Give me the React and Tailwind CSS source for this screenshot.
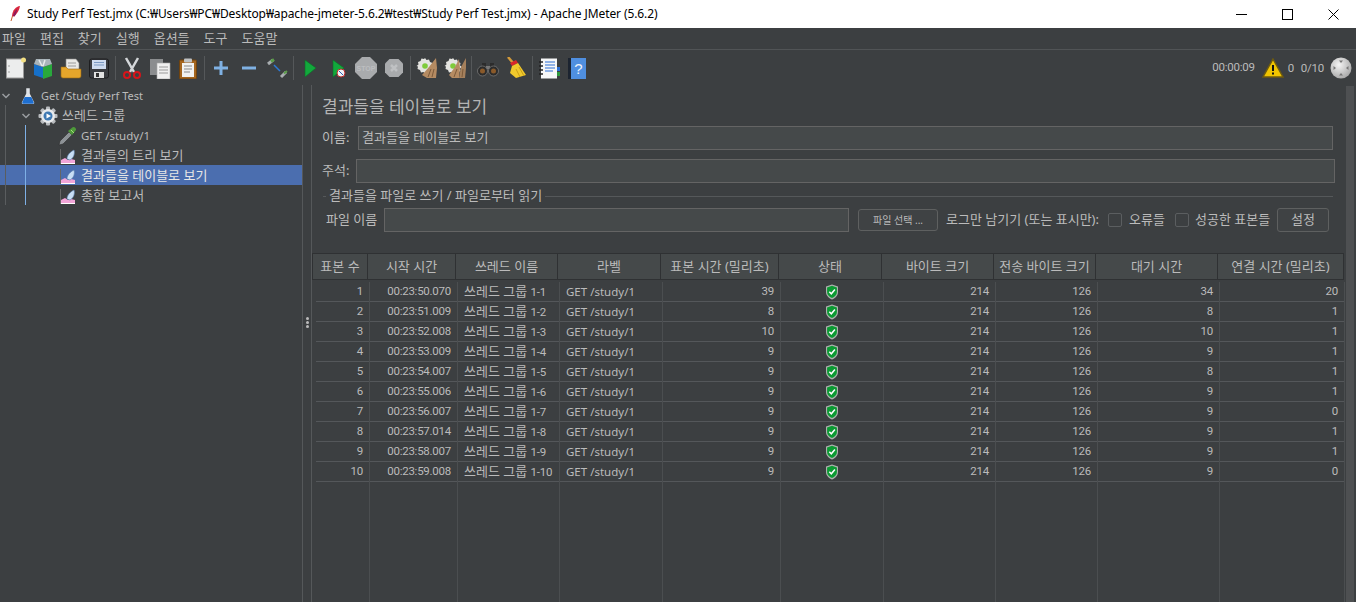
const FONT = 'font-["Noto_Sans","Noto_Sans_CJK_KR",sans-serif]';

const MENUS = ['파일', '편집', '찾기', '실행', '옵션들', '도구', '도움말'];

const HEADERS = [
  ['표본 수', 55],
  ['시작 시간', 88],
  ['쓰레드 이름', 102],
  ['라벨', 103],
  ['표본 시간 (밀리초)', 118],
  ['상태', 103],
  ['바이트 크기', 112],
  ['전송 바이트 크기', 102],
  ['대기 시간', 122],
  ['연결 시간 (밀리초)', 125],
];

const TIMES = ['50.070', '51.009', '52.008', '53.009', '54.007', '55.006', '56.007', '57.014', '58.007', '59.008'];
const ELAPSED = [39, 8, 10, 9, 9, 9, 9, 9, 9, 9];
const LATENCY = [34, 8, 10, 9, 8, 9, 9, 9, 9, 9];
const CONNECT = [20, 1, 1, 1, 1, 1, 0, 1, 1, 0];

const rowIds = TIMES.map((_, i) => i);

function Num({ children }) {
  return <span className='font-["Roboto",sans-serif] text-[11.5px] tracking-[-0.25px]'>{children}</span>;
}

const COLUMNS = [
  { width: 54, align: 'r', cells: rowIds.map((i) => <Num>{i + 1}</Num>) },
  { width: 88, align: 'r', cells: TIMES.map((t) => <Num>{`00:23:${t}`}</Num>) },
  {
    width: 102,
    align: 'l',
    cells: rowIds.map((i) => (
      <span>쓰레드 그룹 <Num>{`1-${i + 1}`}</Num></span>
    )),
  },
  { width: 103, align: 'l', cells: rowIds.map(() => <span className="text-[11.500px]">GET /study/1</span>) },
  { width: 118, align: 'r', cells: ELAPSED.map((v) => <Num>{v}</Num>) },
  { width: 103, align: 'c', cells: rowIds.map(() => <Shield />) },
  { width: 112, align: 'r', cells: rowIds.map(() => <Num>214</Num>) },
  { width: 102, align: 'r', cells: rowIds.map(() => <Num>126</Num>) },
  { width: 122, align: 'r', cells: LATENCY.map((v) => <Num>{v}</Num>) },
  { width: 125, align: 'r', cells: CONNECT.map((v) => <Num>{v}</Num>) },
];

function Shield() {
  return (
    <svg width="14" height="16" viewBox="0 0 14 16">
      <path d="M7 .5 13 2.500V8c0 3.600-2.600 6-6 7.500C3.600 14 1 11.600 1 8V2.500Z" fill="#aeb2ae" />
      <path d="M7 1.800 11.900 3.400V8c0 2.800-2 4.700-4.900 6.100C4.100 12.700 2.100 10.800 2.100 8V3.400Z" fill="#0c9a33" />
      <path d="M4.300 7.800 6.300 9.800 9.900 5.600" fill="none" stroke="#fff" strokeWidth="1.500" />
    </svg>
  );
}

function Feather() {
  return (
    <svg width="14" height="18" viewBox="0 0 14 18">
      <path d="M12 1C8 1.500 4.500 5 4 11l2 .5C9 9 11.500 5 12 1Z" fill="#d8273f" />
      <path d="M9 4C7 6 5.500 8 5 11l1.500.500C8 9 9 6.500 9 4Z" fill="#8d1b5e" />
      <path d="M4.500 11 3 16" stroke="#c45a2a" strokeWidth="1" />
    </svg>
  );
}

function Flask() {
  return (
    <svg width="14" height="20" viewBox="0 0 16 20">
      <path d="M6 1h4v6l5 10c.4 1-.2 2-1.200 2H2.200C1.200 19 .6 18 1 17L6 7Z" fill="#dfe3e8" />
      <path d="M4.200 11h7.600l2.700 6c.3 1-.2 1.800-1 1.800H2.500c-.8 0-1.300-.8-1-1.800Z" fill="#1f6fd0" />
    </svg>
  );
}

function Gear() {
  const teeth = [0, 45, 90, 135];
  return (
    <svg width="20" height="20" viewBox="0 0 20 20">
      {teeth.map((a) => (
        <rect key={a} x="8" y="0.500" width="4" height="19" rx="1" fill="#b9bcbf" transform={`rotate(${a} 10 10)`} />
      ))}
      <circle cx="10" cy="10" r="7" fill="#e8eaec" />
      <circle cx="10" cy="10" r="4.500" fill="#3e79b3" />
      <path d="M8.500 7.500 13 10l-4.500 2.500Z" fill="#fff" />
    </svg>
  );
}

function Pipette() {
  return (
    <svg width="20" height="20" viewBox="0 0 20 20">
      <path d="M1 19 2 15 11 6l3 3-9 9Z" fill="#8d9296" stroke="#2b2b2b" strokeWidth=".6" />
      <path d="M10 5 15 1c1.500-.5 3.500 1.500 3 3l-4 5Z" fill="#4e9a3a" />
      <path d="M13 4l3 3" stroke="#a5dc7c" strokeWidth="1" />
    </svg>
  );
}

function Listener() {
  return (
    <svg width="16" height="16" viewBox="0 0 16 16">
      <path d="M.5 1v15" stroke="#666" strokeWidth="1" />
      <path d="M1 15v-3l4-2 3 2 3-1 4 1v3Z" fill="#f2a5d8" />
      <path d="M7 11C7 7 10 4 14 2c1 3 0 8-4 10Z" fill="#c8def5" stroke="#5b7fae" strokeWidth=".6" />
      <path d="M1 15.500h14" stroke="#fff" strokeWidth="1" />
    </svg>
  );
}

function Chevron() {
  return (
    <svg width="10" height="10" viewBox="0 0 10 10" className="shrink-0">
      <path d="M1.500 3 5 6.500 8.500 3" fill="none" stroke="#9a9da0" strokeWidth="1.500" />
    </svg>
  );
}

function BroomGear() {
  return (
    <>
      <path d="M9 1l1.500 2 2.500-.5 1 2.500 2.500 1-.5 2.500 2 1.500-2 1.500.5 2.500-2.500 1-1 2.500-2.500-.5L9 17l-1.500-2-2.500.5-1-2.500-2.500-1 .5-2.500L.500 9l2-1.500L2 5l2.500-1 1-2.500L8 2Z" fill="#e4e4e0" />
      <circle cx="9" cy="9" r="2.800" fill="#7fcb3a" />
    </>
  );
}

function ToolIcon({ name }) {
  const icons = {
    newFile: (
      <>
        <rect x="2.500" y="2" width="17" height="19" fill="#eceded" stroke="#9a9a9a" />
        <circle cx="19.500" cy="3" r="2.500" fill="#f3e083" />
        <circle cx="5" cy="9" r=".8" fill="#999" />
        <circle cx="5" cy="15" r=".8" fill="#999" />
      </>
    ),
    templates: (
      <>
        <path d="M2 7l9 3v11l-9-3Z" fill="#1670c9" />
        <path d="M11 10l9-3v12l-9 3Z" fill="#29a83c" />
        <path d="M4 2h14l2 5-9 3-9-3Z" fill="#a9b4ba" />
        <path d="M7 3l3 6M13 3l-2 6" stroke="#e6e9ea" strokeWidth="1.500" />
      </>
    ),
    open: (
      <>
        <path d="M6 2h10l3 4v8H6Z" fill="#e9e9e6" stroke="#888" strokeWidth=".6" />
        <path d="M8 6h8M8 9h8" stroke="#9a9a9a" />
        <path d="M1 10h5l2 2h13v7c0 1-1 2-2 2H3c-1 0-2-1-2-2Z" fill="#e6a62b" stroke="#9b6a10" strokeWidth=".6" />
      </>
    ),
    save: (
      <>
        <rect x="1.500" y="2" width="19" height="19" rx="2" fill="#3a3c40" stroke="#1e1e20" />
        <rect x="4" y="3" width="14" height="9" fill="#cfdcf0" />
        <path d="M6 5.500h10M6 8h10" stroke="#7c9ac4" />
        <rect x="6" y="15" width="10" height="6" fill="#e2e2e2" />
        <rect x="8" y="16" width="3" height="4" fill="#333" />
      </>
    ),
    cut: (
      <>
        <path d="M5 1l8 14M17 1 9 15" stroke="#d4d7da" strokeWidth="2.500" />
        <circle cx="6" cy="18" r="3" fill="none" stroke="#d7141a" strokeWidth="2" />
        <circle cx="16" cy="18" r="3" fill="none" stroke="#d7141a" strokeWidth="2" />
      </>
    ),
    copy: (
      <>
        <rect x="1" y="2" width="13" height="16" fill="#8b8d8f" />
        <path d="M8 6h13v16H8Z" fill="#f0f0f0" stroke="#aaa" strokeWidth=".6" />
        <path d="M10 10h9M10 13h9M10 16h9" stroke="#9a9a9a" />
      </>
    ),
    paste: (
      <>
        <rect x="2.500" y="3" width="17" height="19" rx="1" fill="#a5651d" stroke="#6f430f" />
        <rect x="5" y="6" width="12" height="14" fill="#f2f2f0" />
        <rect x="7" y="1.500" width="8" height="4" rx="1" fill="#bfc2c4" />
        <path d="M7 9h8M7 12h8M7 15h6" stroke="#888" />
      </>
    ),
    plus: <path d="M11 4v14M4 11h14" stroke="#7fb1e3" strokeWidth="3" />,
    minus: <path d="M4 11h14" stroke="#7fb1e3" strokeWidth="3" />,
    toggle: (
      <>
        <path d="M2 7 7 3" stroke="#a8adb0" strokeWidth="3" />
        <path d="M5 4.500 8 2.500" stroke="#5c9e49" strokeWidth="3" />
        <path d="M8 8l6 6" stroke="#2c79d6" strokeWidth="1.500" />
        <path d="M15 20l5-5" stroke="#a8adb0" strokeWidth="3" />
        <path d="M18 16.500 21 14" stroke="#5c9e49" strokeWidth="2" />
      </>
    ),
    start: <path d="M6 3 17 11 6 20Z" fill="#12a83c" stroke="#0b6e27" strokeWidth=".6" />,
    startNoTimer: (
      <>
        <path d="M6 3 17 11 6 20Z" fill="#12a83c" stroke="#0b6e27" strokeWidth=".6" />
        <circle cx="14" cy="16" r="4" fill="#eef2f6" stroke="#bb2a2a" />
        <path d="M12 14l4 4" stroke="#2a5fb0" />
      </>
    ),
    stop: (
      <>
        <path d="M7 0h8l7 7v8l-7 7H7l-7-7V7Z" fill="#a9abad" />
        <text x="11" y="14" textAnchor="middle" fontSize="7" fontWeight="700" fill="#bcbec0" fontFamily="Liberation Sans, sans-serif">STOP</text>
      </>
    ),
    shutdown: (
      <>
        <path d="M6.500 2h9L20 6.500v9L15.500 20h-9L2 15.500v-9Z" fill="#a9abad" />
        <path d="M8 8l6 6M14 8l-6 6" stroke="#bfc1c3" strokeWidth="2.500" />
      </>
    ),
    clear: (
      <>
        <BroomGear />
        <path d="M20 1 13 10l-7 8 5 3h9l1-10Z" fill="#b58b62" />
        <path d="M12 20l3-8M16 20l2-8" stroke="#7c5a3a" />
      </>
    ),
    clearAll: (
      <>
        <BroomGear />
        <path d="M15 2 11 10l-6 8 3 3h7l1-10Z" fill="#b58b62" />
        <path d="M22 1 17 10l-2 11h6l1-10Z" fill="#a5805c" />
        <path d="M10 20l3-8M18 20l1-8" stroke="#7c5a3a" />
      </>
    ),
    search: (
      <>
        <path d="M5 6h4v6H5ZM13 6h4v6h-4Z" fill="#2c2c2c" />
        <rect x="9" y="9" width="4" height="3" fill="#777" />
        <circle cx="5.500" cy="14" r="5" fill="#2c2c2c" stroke="#8d8d8d" strokeWidth=".6" />
        <circle cx="16.500" cy="14" r="5" fill="#2c2c2c" stroke="#8d8d8d" strokeWidth=".6" />
        <circle cx="5.500" cy="14" r="2.500" fill="#8a5a2a" />
        <circle cx="16.500" cy="14" r="2.500" fill="#8a5a2a" />
      </>
    ),
    broom: (
      <>
        <path d="M3 0 9 7" stroke="#d39a3a" strokeWidth="2.500" />
        <path d="M5 6l6-3 2 3-6 3Z" fill="#d8262b" />
        <path d="M7 9l6-3 8 12-10 3-6-5Z" fill="#f0c92c" />
        <path d="M11 12l4 8M14 10l5 9" stroke="#c99e16" />
      </>
    ),
    logs: (
      <>
        <rect x="3" y="1.500" width="16" height="20" fill="#f6f7f8" />
        <path d="M1 5h4M1 9h4M1 13h4M1 17h4" stroke="#222" strokeWidth="1.500" />
        <path d="M7 5h10M7 8h10M7 11h10M7 14h8" stroke="#2a6fd6" strokeWidth="1.200" />
        <rect x="19" y="10" width="3" height="4" fill="#2a6fd6" />
        <rect x="19" y="15" width="3" height="4" fill="#2e9a3e" />
      </>
    ),
    help: (
      <>
        <rect x="2" y="1" width="5" height="21" fill="#1c2430" />
        <rect x="5" y="1" width="15" height="21" fill="#4f8fe0" />
        <text x="12.500" y="17" textAnchor="middle" fontSize="15" fill="#eef4fb" fontFamily="Liberation Sans, sans-serif">?</text>
      </>
    ),
  };
  return (
    <div className="flex h-7 w-7 items-center justify-center">
      <svg width="22" height="22" viewBox="0 0 22 22">{icons[name]}</svg>
    </div>
  );
}

function ToolSep() {
  return <div className="mx-[2px] h-[24px] w-px bg-[#55585a]" />;
}

function TreeRow({ selected, indent, chevron, icon, children }) {
  return (
    <div
      className={`flex h-5 items-center pt-px ${selected ? 'bg-[#4b6eaf] text-[#e6e6e6]' : ''}`}
      style={{ paddingLeft: indent }}
    >
      {chevron && <Chevron />}
      {icon}
      <span className="whitespace-nowrap">{children}</span>
    </div>
  );
}

function Field({ className }) {
  return <div className={`h-6 border border-[#646464] bg-[#45494a] ${className}`} />;
}

function Button({ className, children }) {
  return (
    <div className={`flex items-center justify-center rounded-[3px] border border-[#5e6060] bg-[#3f4244] ${className}`}>
      {children}
    </div>
  );
}

function Checkbox() {
  return <div className="h-[14px] w-[14px] rounded-[2px] border border-[#5b5e60] bg-[#3c3f41]" />;
}

function WinButton({ children }) {
  return (
    <div className="flex h-7 w-[46px] items-center justify-center">
      <svg width="11" height="11" viewBox="0 0 11 11">{children}</svg>
    </div>
  );
}

export default function App() {
  return (
    <div className={`flex h-[602px] w-[1356px] flex-col overflow-hidden bg-[#3c3f41] text-[13px] text-[#bbbbbb] ${FONT}`}>
      <div className="flex h-7 shrink-0 items-center bg-white pl-[8px] text-[12px] tracking-[-0.1px] text-black">
        <Feather />
        <span className="ml-[5px]">Study Perf Test.jmx (C:₩Users₩PC₩Desktop₩apache-jmeter-5.6.2₩test₩Study Perf Test.jmx) - Apache JMeter (5.6.2)</span>
        <div className="ml-auto flex items-center">
          <WinButton><path d="M0 5.500h11" stroke="#000" /></WinButton>
          <WinButton><rect x=".5" y=".5" width="10" height="10" fill="none" stroke="#000" /></WinButton>
          <WinButton><path d="M.5.5l10 10M10.500.5l-10 10" stroke="#000" /></WinButton>
        </div>
      </div>

      <div className="flex h-[22px] shrink-0 items-center gap-[14px] border-b border-[#515456] pl-[2px]">
        {MENUS.map((m) => <span key={m}>{m}</span>)}
      </div>

      <div className="flex h-[35px] shrink-0 items-center pl-px">
        <ToolIcon name="newFile" />
        <ToolIcon name="templates" />
        <ToolIcon name="open" />
        <ToolIcon name="save" />
        <ToolSep />
        <ToolIcon name="cut" />
        <ToolIcon name="copy" />
        <ToolIcon name="paste" />
        <ToolSep />
        <ToolIcon name="plus" />
        <ToolIcon name="minus" />
        <ToolIcon name="toggle" />
        <ToolSep />
        <ToolIcon name="start" />
        <ToolIcon name="startNoTimer" />
        <ToolIcon name="stop" />
        <ToolIcon name="shutdown" />
        <ToolSep />
        <ToolIcon name="clear" />
        <ToolIcon name="clearAll" />
        <ToolSep />
        <ToolIcon name="search" />
        <ToolIcon name="broom" />
        <ToolSep />
        <ToolIcon name="logs" />
        <ToolIcon name="help" />
        <div className="ml-auto flex items-center pr-[4px]">
          <Num>00:00:09</Num>
          <svg width="22" height="20" viewBox="0 0 22 20" className="ml-[7px]">
            <path d="M11 1 21 19H1Z" fill="#f0c400" stroke="#6d5a10" strokeWidth="1.500" />
            <path d="M11 7v6M11 14.500v2" stroke="#111" strokeWidth="2" />
          </svg>
          <span className="ml-[4px]"><Num>0</Num></span>
          <span className="ml-[7px]"><Num>0/10</Num></span>
          <svg width="22" height="22" viewBox="0 0 22 22" className="ml-[6px]">
            <defs>
              <radialGradient id="ball" cx="40%" cy="35%" r="75%">
                <stop offset="0%" stopColor="#f4f4f4" />
                <stop offset="100%" stopColor="#a0a0a0" />
              </radialGradient>
            </defs>
            <circle cx="11" cy="11" r="10.500" fill="url(#ball)" />
            <path d="M9 3.500h4L11 6ZM9 18.500h4L11 16ZM3.500 9v4L6 11ZM18.500 9v4L16 11Z" fill="#777" />
          </svg>
        </div>
      </div>

      <div className="flex min-h-0 flex-1">
        <div className="relative w-[303px] shrink-0 border-r border-[#55585a]">
          <div className="absolute left-[5px] top-[20px] h-[100px] w-px bg-[#5a5d5f]" />
          <div className="absolute left-[25px] top-[40px] h-[80px] w-px bg-[#7eb0e6]" />
          <TreeRow indent={1} chevron icon={<span className="ml-[10px] mr-[6px] flex"><Flask /></span>}>
            <span className="text-[11px]">Get /Study Perf Test</span>
          </TreeRow>
          <TreeRow indent={21} chevron icon={<span className="ml-[7px] mr-[4px] flex"><Gear /></span>}>
            쓰레드 그룹
          </TreeRow>
          <TreeRow indent={58} icon={<span className="mr-[3px] flex"><Pipette /></span>}>
            <span className="text-[11.500px]">GET /study/1</span>
          </TreeRow>
          <TreeRow indent={60} icon={<span className="mr-[5px] flex"><Listener /></span>}>결과들의 트리 보기</TreeRow>
          <TreeRow selected indent={60} icon={<span className="mr-[5px] flex"><Listener /></span>}>결과들을 테이블로 보기</TreeRow>
          <TreeRow indent={60} icon={<span className="mr-[5px] flex"><Listener /></span>}>총합 보고서</TreeRow>
        </div>

        <div className="flex w-[9px] shrink-0 flex-col items-center justify-center gap-px border-r border-[#55585a] pb-[42px]">
          <div className="h-[3px] w-[3px] rounded-full bg-[#bbbbbb]" />
          <div className="h-[3px] w-[3px] rounded-full bg-[#bbbbbb]" />
          <div className="h-[3px] w-[3px] rounded-full bg-[#bbbbbb]" />
        </div>

        <div className="flex min-w-0 flex-1 flex-col">
          <div className="pl-[10px] pt-[10px] text-[17px] leading-[24px] text-[#b4b4b4]">결과들을 테이블로 보기</div>
          <div className="mt-[7px] flex h-6 items-center pl-[10px]">
            <span className="w-[36px]">이름:</span>
            <div className="flex h-6 w-[975px] items-center border border-[#646464] bg-[#45494a] pl-[3px]">결과들을 테이블로 보기</div>
          </div>
          <div className="mt-[9px] flex h-6 items-center pl-[10px]">
            <span className="w-[34px]">주석:</span>
            <Field className="w-[979px]" />
          </div>
          <div className="mt-[5px] flex h-4 items-center pl-[11px] pr-[13px]">
            <div className="h-px w-[3px] bg-[#55585a]" />
            <span className="mx-[3px]">결과들을 파일로 쓰기 / 파일로부터 읽기</span>
            <div className="h-px flex-1 bg-[#55585a]" />
          </div>
          <div className="mt-[4px] flex h-6 items-center pl-[14px]">
            <span className="w-[58px]">파일 이름</span>
            <Field className="w-[465px]" />
            <Button className="ml-[9px] h-[22px] w-[80px] text-[10px]">파일 선택 ...</Button>
            <span className="ml-[8px] whitespace-nowrap">로그만 남기기 (또는 표시만):</span>
            <div className="ml-auto flex items-center pr-[17px]">
              <Checkbox />
              <span className="ml-[7px] w-[46px]">오류들</span>
              <Checkbox />
              <span className="ml-[6px] w-[82px]">성공한 표본들</span>
              <Button className="h-6 w-[52px]">설정</Button>
            </div>
          </div>

          <div className="mt-[21px] flex h-[27px] w-[1032px] shrink-0 border border-[#2f3133] bg-[#45494a]">
            {HEADERS.map(([label, width]) => (
              <div
                key={label}
                className="flex shrink-0 items-center justify-center whitespace-nowrap border-r border-[#2f3133] last:border-r-0"
                style={{ width }}
              >
                {label}
              </div>
            ))}
          </div>

          <div className="ml-[4px] mt-[2px] flex min-h-0 flex-1">
            {COLUMNS.map((col, c) => (
              <div key={c} className="shrink-0 border-r border-[#4b4e50]" style={{ width: col.width }}>
                {col.cells.map((cell, r) => (
                  <div
                    key={r}
                    className={`flex h-5 items-center whitespace-nowrap border-b border-[#54575a] ${
                      col.align === 'r' ? 'justify-end pr-[6px]' : col.align === 'c' ? 'justify-center' : 'pl-[6px]'
                    }`}
                  >
                    {cell}
                  </div>
                ))}
              </div>
            ))}
          </div>
        </div>

        <div className="mr-[2px] mt-px w-[8px] shrink-0 bg-[#4e5052]" />
      </div>
    </div>
  );
}
